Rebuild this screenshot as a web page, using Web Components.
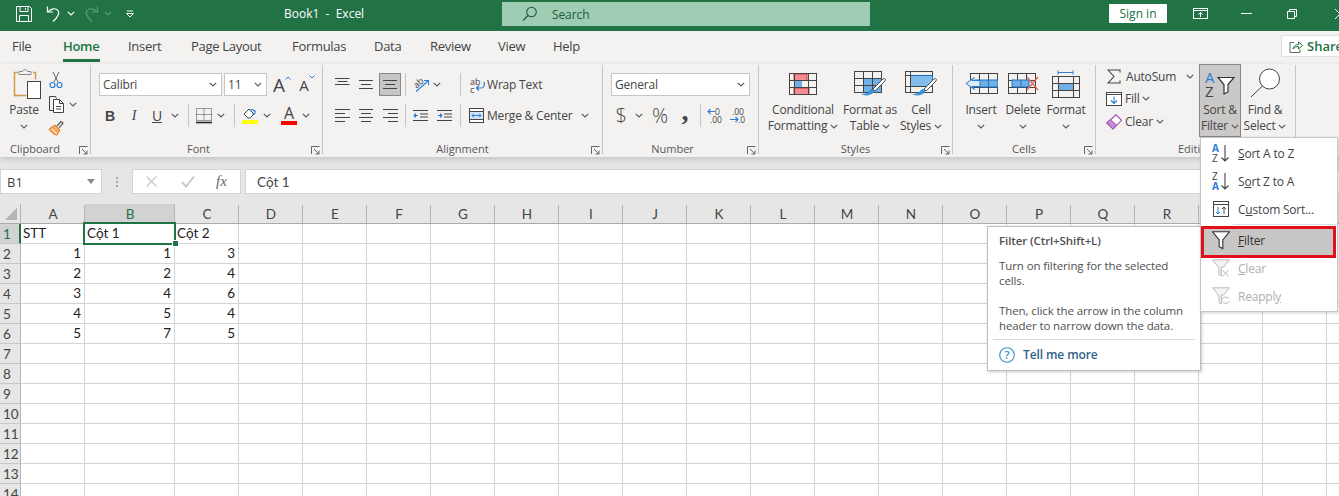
<!DOCTYPE html>
<html lang="en">
<head>
<meta charset="utf-8">
<title>Book1 - Excel</title>
<style>
  html, body { margin: 0; padding: 0; }
  body {
    width: 1339px;
    height: 496px;
    overflow: hidden;
    position: relative;
    background: #fff;
    font-family: "Open Sans", "Noto Sans", sans-serif;
    font-size: 12px;
    color: #444;
  }
</style>
</head>
<body>
<xl-titlebar></xl-titlebar>
<xl-tabs></xl-tabs>
<xl-ribbon></xl-ribbon>
<xl-formula-bar></xl-formula-bar>
<xl-sheet></xl-sheet>
<xl-tooltip></xl-tooltip>
<xl-menu></xl-menu>

<script>
const GRID = '#444';

const chev = (color = '#555') =>
  `<svg width="8" height="5" viewBox="0 0 8 5" style="display:inline-block;vertical-align:middle"><path d="M.8.8 4 4l3.2-3.2" fill="none" stroke="${color}" stroke-width="1.1"/></svg>`;

const launcher = `<svg width="9" height="9" viewBox="0 0 9 9"><path d="M.5 8V.5H8.500M3 3l5 5M8 4.500V8H4.500" fill="none" stroke="#666"/></svg>`;

// grid of cells used by the big ribbon icons
const gridLines = (x, y, w, h, xs, ys) =>
  `<rect x="${x + .5}" y="${y + .5}" width="${w - 1}" height="${h - 1}" fill="none" stroke="${GRID}"/>` +
  xs.map(v => `<path d="M${v + .5} ${y}v${h}" stroke="${GRID}"/>`).join('') +
  ys.map(v => `<path d="M${x} ${v + .5}h${w}" stroke="${GRID}"/>`).join('');

const brush = `<path d="M29 8 19 18l2 2L31 10c1-2 0-3-2-2z" fill="#fff" stroke="#555"/><path d="M18 18c-3 0-3 4-5 4-2 .5-4 1-6 1 3 2 9 2 12-1 1-1 2-2 1-3z" fill="#3c8fdc"/>`;

const ICONS = {
  save: [18, 18, `<path d="M1.500 1.500h13l2 2v13h-15zM5 1.500v5h8v-5M4.500 16.500v-6h9v6M10.500 3v2" fill="none" stroke="#fff"/>`],
  undo: [16, 18, `<path d="M1.500 1.500v5.500h5.500" fill="none" stroke="#fff" stroke-width="1.200"/><path d="M2 7c3-4 8-4 10-1.500 2 3 .5 6-5 11" fill="none" stroke="#fff" stroke-width="1.200"/>`],
  redo: [16, 18, `<path d="M14.500 1.500v5.500H9" fill="none" stroke="#5e9a7c" stroke-width="1.200"/><path d="M14 7c-3-4-8-4-10-1.500-2 3-.5 6 5 11" fill="none" stroke="#5e9a7c" stroke-width="1.200"/>`],
  qat: [8, 8, `<path d="M1 1h6" stroke="#fff"/><path d="M.500 3.500h7L4 7z" fill="none" stroke="#fff"/>`],
  search: [15, 16, `<circle cx="9.500" cy="6" r="4.800" fill="none" stroke="#1d5b3b" stroke-width="1.100"/><path d="M6 9.500 1 14.500" stroke="#1d5b3b" stroke-width="1.100"/>`],
  display: [15, 11, `<rect x=".5" y=".5" width="14" height="10" fill="none" stroke="#fff"/><path d="M0 2.500h15" stroke="#fff"/><path d="M7.500 9V4.500M5.500 6.500l2-2 2 2" fill="none" stroke="#fff"/>`],
  minimize: [11, 1, `<path d="M0 .5h11" stroke="#fff"/>`],
  restore: [10, 10, `<path d="M.5 2.500h7v7h-7zM2.500 2.500v-2h7v7h-2" fill="none" stroke="#fff"/>`],
  close: [10, 10, `<path d="M0 0l10 10M10 0 0 10" stroke="#fff"/>`],
  share: [14, 13, `<path d="M5 2.500H1v10h10v-3" fill="none" stroke="#666"/><path d="M4 9c.5-3 3-4.500 5.500-4.500V2l4 3.500-4 3.500V6.500C7.500 6.500 5.500 7.500 4 9z" fill="none" stroke="#217346"/>`],

  paste: [28, 32, `<path d="M5 4.500H1.500v23H5" fill="none" stroke="#d39a4e" stroke-width="1.500"/><path d="M20 4.500h2.500v7" fill="none" stroke="#d39a4e" stroke-width="1.500"/><path d="M1.500 27.500h12" stroke="#d39a4e" stroke-width="1.500"/><path d="M6 6.500V3.500h3.500C10 1 14 1 14.500 3.500H18v3z" fill="#f3f2f1" stroke="#888"/><rect x="14.500" y="13.500" width="13" height="17" fill="#fff" stroke="#444"/>`],
  cut: [14, 18, `<path d="M4 1l5 10M10 1 5 11" fill="none" stroke="#666"/><circle cx="3.500" cy="14" r="2.500" fill="none" stroke="#2b7cd3" stroke-width="1.200"/><circle cx="10.500" cy="14" r="2.500" fill="none" stroke="#2b7cd3" stroke-width="1.200"/>`],
  copy: [16, 17, `<path d="M5.500 14.500h-4V.500h6l1 2" fill="none" stroke="#444"/><path d="M5.500 3.500h6l4 4v9h-10z" fill="#fff" stroke="#444"/><path d="M11.500 3.500v4h4M8 10.500h5M8 13h5" fill="none" stroke="#444"/>`],
  painter: [16, 16, `<path d="M9 6 13 1.500 15 3l-4 5" fill="none" stroke="#555" stroke-width="1.200"/><path d="M1 9l6-4 5 5-3 5c-3 0-6-3-8-6z" fill="#f2ab62" stroke="#d97a1a"/><path d="M4 9l5 5" stroke="#fff"/>`],
  borders: [16, 16, `<path d="M.5.5h15v12H.5zM8 .5v12M.5 6.500h15" fill="none" stroke="#444" stroke-dasharray="1 1"/><path d="M0 14.500h16" stroke="#222" stroke-width="1.600"/>`],
  fill: [16, 17, `<path d="M2 7 7 2l5 5-4 4H6z" fill="#fff" stroke="#444"/><path d="M13 5c-2-3-4-3-5-1" fill="none" stroke="#2b7cd3" stroke-width="1.200"/><path d="M13 3v4h-3" fill="none" stroke="#2b7cd3"/><rect x="0" y="13" width="16" height="4" fill="#ffff00"/>`],
  atop: [15, 9, `<path d="M0 .5h14.500M2.500 3.500h10M0 6.500h14.500" stroke="#444"/>`],
  amid: [14, 9, `<path d="M0 .5h14M2 4.500h10M0 8.500h14" stroke="#444"/>`],
  abot: [14, 9, `<path d="M0 .5h14M2 4.500h10M0 8.500h14" stroke="#444"/>`],
  orient: [17, 16, `<text x="1" y="9" font-size="9" fill="#444" font-family="Open Sans" transform="rotate(-40 6 7)">ab</text><path d="M3 14.500 15 4M11 3.500h4.500V8" fill="none" stroke="#2b7cd3" stroke-width="1.100"/>`],
  aleft: [15, 13, `<path d="M0 .5h15M0 4.500h10M0 8.500h15M0 12.500h10" stroke="#444"/>`],
  acenter: [14, 13, `<path d="M0 .5h14M2 4.500h10M0 8.500h14M2 12.500h10" stroke="#444"/>`],
  aright: [15, 13, `<path d="M0 .5h15M5 4.500h10M0 8.500h15M5 12.500h10" stroke="#444"/>`],
  indL: [15, 11, `<path d="M0 .5h15M7 4h8M7 7h8M0 10.500h15" stroke="#444"/><path d="M5 5.500H1M3 3.500l-2 2 2 2" fill="none" stroke="#2b7cd3" stroke-width="1.100"/>`],
  indR: [15, 11, `<path d="M0 .5h15M7 4h8M7 7h8M0 10.500h15" stroke="#444"/><path d="M1 5.500h4M3 3.500l2 2-2 2" fill="none" stroke="#2b7cd3" stroke-width="1.100"/>`],
  wrap: [15, 16, `<text x="0" y="7.500" font-size="9" fill="#444" font-family="Open Sans">ab</text><text x="0" y="15.500" font-size="9" fill="#444" font-family="Open Sans">c</text><path d="M14 5c1 3 0 6-3 6H6.500M9 8.500 6.500 11 9 13.500" fill="none" stroke="#2b7cd3" stroke-width="1.200"/>`],
  merge: [15, 15, `<rect x=".5" y=".5" width="14" height="14" fill="#fff" stroke="#444"/><path d="M0 3.500h15M0 11.500h15" stroke="#444"/><rect x="1" y="4" width="13" height="7" fill="#d4e7f8"/><path d="M3 7.500h9M5 5.500l-2 2 2 2M10 5.500l2 2-2 2" fill="none" stroke="#2b7cd3"/>`],
  incdec: [16, 17, `<text x="8" y="8" font-size="8.500" fill="#444" font-family="Open Sans">0</text><text x="3" y="16" font-size="8.500" fill="#444" font-family="Open Sans">.00</text><path d="M8 4.500H1M3.500 2 1 4.500 3.500 7" fill="none" stroke="#2b7cd3" stroke-width="1.100"/>`],
  decdec: [16, 17, `<text x="3" y="8" font-size="8.500" fill="#444" font-family="Open Sans">.00</text><text x="9" y="16" font-size="8.500" fill="#444" font-family="Open Sans">.0</text><path d="M1 12.500h8M6.500 10 9 12.500 6.500 15" fill="none" stroke="#2b7cd3" stroke-width="1.100"/>`],

  cond: [28, 22, `<rect x="5" y="1" width="13" height="6.500" fill="#f48a94" stroke="#d13438"/><rect x="5" y="8" width="8" height="6" fill="#6fb0e8"/><rect x="5" y="15" width="15" height="6.500" fill="#f48a94" stroke="#d13438"/>${gridLines(0, 0, 28, 22, [5, 19], [7, 14])}`],
  table: [32, 26, `<rect x="10" y="8" width="18" height="14" fill="#6fb0e8"/>${gridLines(0, 0, 28, 22, [9, 18], [7, 14])}${brush}`],
  styles: [32, 26, `<rect x="6" y="4" width="22" height="12" fill="#83bbec"/>${gridLines(0, 0, 28, 22, [5], [4, 15])}<path d="M6 4.500h22M27.500 4v12" stroke="#1f6fb8"/>${brush}`],
  insert: [33, 22, `${gridLines(5, 0, 28, 21, [14, 23], [7, 14])}<rect x="10" y="7" width="23" height="7" fill="#6fb0e8" stroke="#1f6fb8"/><path d="M23.500 7v7" stroke="#1f6fb8"/><path d="M15 7.500H7l2.500-3L1 10.500l8.500 6L7 13.500h8z" fill="#dcebf9" stroke="#2b7cd3"/>`],
  remove: [31, 22, `${gridLines(0, 0, 28, 21, [9, 18], [7, 14])}<rect x="4" y="7" width="17" height="7" fill="#6fb0e8" stroke="#1f6fb8"/><path d="M13 7v7" stroke="#1f6fb8"/><path d="M19 4l11 13M30 4 19 17" stroke="#e8625b" stroke-width="1.300"/>`],
  format: [28, 28, `<path d="M6 .5v4M21 .5v4M6 2.500h15" fill="none" stroke="#2b7cd3"/><rect x="6" y="13" width="16" height="7" fill="#6fb0e8"/>${`<g transform="translate(0 6)">${gridLines(0, 0, 28, 22, [6, 21], [7, 14])}</g>`}`],
  sigma: [14, 15, `<path d="M13 3.500V1H1l6 6.500L1 14h12v-2.500" fill="none" stroke="#444" stroke-width="1.100"/>`],
  filldown: [16, 14, `<rect x=".5" y=".5" width="15" height="13" fill="#fff" stroke="#444"/><path d="M0 2.500h16" stroke="#444"/><path d="M8 4.500v7M5 8.500l3 3 3-3" fill="none" stroke="#2b7cd3" stroke-width="1.100"/>`],
  eraser: [16, 16, `<path d="M.8 9 10 .8l5.500 5.500L7 15z" fill="#fff" stroke="#a24bb4" stroke-width="1.100"/><path d="M.8 9 4.500 5.500 10.500 11 7 15z" fill="#c98bd6" stroke="#a24bb4"/>`],
  sortbig: [31, 28, `<text x="0" y="13" font-size="15" fill="#2b7cd3" font-family="Open Sans">A</text><text x="0" y="27" font-size="15" fill="#444" font-family="Open Sans">Z</text><path d="M13 7.500h16l-6 7v7.500l-4 2v-9.500z" fill="#fff" stroke="#333" stroke-width="1.200"/>`],
  find: [30, 31, `<circle cx="19.500" cy="11" r="10" fill="#fff" stroke="#444"/><path d="M12.500 18 1 29" stroke="#444"/>`],

  az: [18, 19, `<text x="0" y="8" font-size="10" font-weight="700" fill="#2b7cd3" font-family="Open Sans">A</text><text x="0" y="18" font-size="10" fill="#444" font-family="Open Sans">Z</text><path d="M13 1v16M9.500 13.500 13 17l3.500-3.500" fill="none" stroke="#444" stroke-width="1.100"/>`],
  za: [18, 19, `<text x="0" y="8" font-size="10" fill="#444" font-family="Open Sans">Z</text><text x="0" y="18" font-size="10" font-weight="700" fill="#2b7cd3" font-family="Open Sans">A</text><path d="M13 1v16M9.500 13.500 13 17l3.500-3.500" fill="none" stroke="#444" stroke-width="1.100"/>`],
  custom: [16, 16, `<rect x=".5" y=".5" width="15" height="15" fill="#fff" stroke="#444"/><path d="M0 3.500h16" stroke="#444"/><path d="M5 6v7M3 11l2 2 2-2" fill="none" stroke="#2b7cd3"/><path d="M11 13V6M9 8l2-2 2 2" fill="none" stroke="#444"/>`],
  funnel: [18, 19, `<path d="M.6.8h16.800l-6.600 8.200v8.500l-3.600-1.800V9z" fill="#fff" stroke="#333" stroke-width="1.100"/>`],
  funnelx: [18, 19, `<path d="M.6.8h16.800l-5.600 7.200H9.300v9l-2.300-1.200V9z" fill="#f3f3f3" stroke="#bbb"/><path d="M10.500 11l6 6.500M16.500 11l-6 6.500" stroke="#bbb"/>`],
  funnelr: [18, 19, `<path d="M.6.8h16.800l-5.600 7.200H9.300v9l-2.300-1.200V9z" fill="#f3f3f3" stroke="#bbb"/><path d="M10 13c0-3 5-4 7-1.500M17.500 14c-1 3-6 3-7 .5" fill="none" stroke="#bbb"/>`],
  help: [16, 16, `<circle cx="8" cy="8" r="7.300" fill="none" stroke="#2f8fc4" stroke-width="1.100"/><text x="8" y="12" font-size="11" font-weight="600" text-anchor="middle" fill="#2f8fc4" font-family="Open Sans">?</text>`],
  xmark: [13, 13, `<path d="M1.500 1.500l10 10M11.500 1.500l-10 10" stroke="#c8c8c8" stroke-width="1.400"/>`],
  check: [14, 13, `<path d="M1 7l4 4.500L13 1.500" fill="none" stroke="#c8c8c8" stroke-width="2"/>`],
};

class XlIcon extends HTMLElement {
  connectedCallback() {
    const [w, h, body] = ICONS[this.getAttribute('name')];
    this.attachShadow({ mode: 'open' }).innerHTML = `
      <style>:host{display:inline-flex;flex:none;line-height:0;letter-spacing:0}</style>
      <svg width="${w}" height="${h}" viewBox="0 0 ${w} ${h}">${body}</svg>`;
  }
}
customElements.define('xl-icon', XlIcon);

class XlTitlebar extends HTMLElement {
  constructor() {
    super();
    this.attachShadow({ mode: 'open' }).innerHTML = `
      <style>
        :host { display: flex; height: 31px; background: #217346; color: #fff; font-size: 12px; overflow: hidden; }
        .qat { display: flex; align-items: center; flex: none; width: 284px; height: 27px; padding-left: 15px; box-sizing: border-box; }
        .title { flex: none; width: 218px; white-space: pre; line-height: 27px; }
        .search { flex: none; width: 368px; height: 24px; margin-top: 2px; background: #9fcdb3; color: #1d5b3b; display: flex; align-items: center; padding-left: 20px; box-sizing: border-box; letter-spacing: -.1px; }
        .search span { margin-left: 15px; }
        .right { flex: none; display: flex; align-items: center; height: 27px; }
        .sign { margin-left: 239px; width: 58px; height: 19px; background: #fff; color: #217346; border-radius: 1px; text-align: center; line-height: 19px; }
      </style>
      <div class="qat">
        <xl-icon name="save"></xl-icon>
        <xl-icon name="undo" style="margin-left:13px"></xl-icon>
        <span style="margin-left:5px;line-height:0">${chev('#fff')}</span>
        <xl-icon name="redo" style="margin-left:8px"></xl-icon>
        <span style="margin-left:5px;line-height:0">${chev('#5e9a7c')}</span>
        <xl-icon name="qat" style="margin-left:14px"></xl-icon>
      </div>
      <div class="title">Book1  -  Excel</div>
      <div class="search"><xl-icon name="search"></xl-icon><span>Search</span></div>
      <div class="right">
        <div class="sign">Sign in</div>
        <xl-icon name="display" style="margin-left:26px"></xl-icon>
        <xl-icon name="minimize" style="margin-left:33px"></xl-icon>
        <xl-icon name="restore" style="margin-left:35px"></xl-icon>
        <xl-icon name="close" style="margin-left:38px"></xl-icon>
      </div>`;
  }
}
customElements.define('xl-titlebar', XlTitlebar);

class XlTabs extends HTMLElement {
  constructor() {
    super();
    const tabs = [['File', 12], ['Home', 63], ['Insert', 128], ['Page Layout', 191], ['Formulas', 292], ['Data', 374], ['Review', 430], ['View', 498], ['Help', 553]];
    const widths = tabs.map((t, i) => (tabs[i + 1] ? tabs[i + 1][1] - t[1] : 60));
    this.attachShadow({ mode: 'open' }).innerHTML = `
      <style>
        :host { display: flex; height: 33px; background: #f3f2f1; font-size: 13px; letter-spacing: -.3px; color: #444; padding-left: 12px; box-sizing: border-box; position: relative; }
        .tab { line-height: 30px; flex: none; white-space: nowrap; }
        .tab.on span { display: inline-block; height: 28px; color: #217346; font-weight: 600; border-bottom: 3px solid #217346; padding-right: 1px; }
        .share { margin-left: auto; margin-top: 4px; width: 58px; height: 22px; background: #fff; border: 1px solid #e1dfdd; border-right: 0; border-radius: 2px 0 0 2px; box-sizing: border-box; display: flex; align-items: center; padding-left: 7px; color: #217346; font-weight: 600; overflow: hidden; white-space: nowrap; letter-spacing: 0; }
        .share span { margin-left: 4px; }
      </style>
      ${tabs.map((t, i) => `<div class="tab ${t[0] === 'Home' ? 'on' : ''}" style="width:${widths[i]}px"><span>${t[0]}</span></div>`).join('')}
      <div class="share"><xl-icon name="share"></xl-icon><span>Share</span></div>`;
  }
}
customElements.define('xl-tabs', XlTabs);

class XlGroup extends HTMLElement {
  constructor() {
    super();
    this.attachShadow({ mode: 'open' }).innerHTML = `
      <style>
        :host { display: flex; flex-direction: column; flex: none; height: 89px; box-sizing: border-box; border-right: 1px solid #c8c6c4; position: relative; }
        .body { flex: 1; min-height: 0; display: flex; }
        .label { height: 16px; line-height: 16px; margin-bottom: -3px; text-align: center; font-size: 11px; letter-spacing: 0; color: #555; position: relative; }
        .launch { position: absolute; top: 4px; right: 2px; line-height: 0; }
        .launch.off { display: none; }
      </style>
      <div class="body"><slot></slot></div>
      <div class="label"><span id="t"></span></div>
      <span class="launch" style="bottom:-1px;top:auto">${launcher}</span>`;
  }
  connectedCallback() {
    this.shadowRoot.getElementById('t').textContent = this.getAttribute('label');
    if (this.hasAttribute('nolaunch')) this.shadowRoot.querySelector('.launch').classList.add('off');
    const off = this.getAttribute('offset');
    if (off) this.shadowRoot.querySelector('.label').style.left = off + 'px';
  }
}
customElements.define('xl-group', XlGroup);

class XlBig extends HTMLElement {
  constructor() {
    super();
    this.attachShadow({ mode: 'open' }).innerHTML = `
      <style>
        :host { display: flex; flex-direction: column; align-items: center; flex: none; font-size: 12px; color: #444; }
        .icon { height: 37px; display: flex; align-items: center; justify-content: center; }
        .line { height: 16px; line-height: 16px; white-space: nowrap; text-align: center; }
      </style>
      <div class="icon"><slot></slot></div>
      <div class="line" id="a"></div>
      <div class="line" id="b"></div>`;
  }
  connectedCallback() {
    this.shadowRoot.getElementById('a').textContent = this.getAttribute('a');
    this.shadowRoot.getElementById('b').innerHTML = (this.getAttribute('b') || '') + ' ' + chev();
  }
}
customElements.define('xl-big', XlBig);

class XlRibbon extends HTMLElement {
  constructor() {
    super();
    const c = (w, html = '', style = '') => `<span class="c" style="width:${w}px;${style}">${html}</span>`;
    const ic = n => `<xl-icon name="${n}"></xl-icon>`;
    const sep = w => c(w, '<i class="sep"></i>');
    this.attachShadow({ mode: 'open' }).innerHTML = `
      <style>
        :host { display: flex; height: 93px; padding-top: 1px; box-sizing: border-box; background: #f3f2f1; font-size: 12px; letter-spacing: -.2px; color: #444; box-shadow: 0 2px 6px rgba(0,0,0,.16); position: relative; z-index: 1; }
        .rows { display: flex; flex-direction: column; flex: none; }
        .row { display: flex; align-items: center; flex: none; }
        .c { display: inline-flex; align-items: center; justify-content: center; flex: none; height: 100%; }
        .sep { display: block; width: 1px; height: 23px; background: #c8c6c4; }
        .box { height: 23px; background: #fff; border: 1px solid #c8c6c4; box-sizing: border-box; display: flex; align-items: center; justify-content: space-between; padding: 0 4px 0 3px; flex: none; }
        .selected { height: 23px; width: 22px; background: #c8c6c4; border: 1px solid #8a8886; box-sizing: border-box; }
        .grow { font-size: 19px; position: relative; color: #444; line-height: 20px; }
        .sup { position: absolute; top: -2px; right: -6px; line-height: 0; }
        .sort { width: 42px; height: 73px; margin-top: -1px; background: #cbc9c7; border: 1px solid #8a8886; box-sizing: border-box; z-index: 2; }
        .tx { margin-left: 3px; white-space: nowrap; }
      </style>

      <xl-group label="Clipboard" offset="-10" style="width:91px">
        <xl-big a="Paste" style="width:38px;margin-left:5px"><xl-icon name="paste" style="margin-left:5px"></xl-icon></xl-big>
        <div class="rows" style="margin-left:5px;padding-top:3px">
          <div class="row" style="height:24px;padding-left:1px">${ic('cut')}</div>
          <div class="row" style="height:24px">${ic('copy')}<span style="margin-left:5px;line-height:0">${chev()}</span></div>
          <div class="row" style="height:24px">${ic('painter')}</div>
        </div>
      </xl-group>

      <xl-group label="Font" offset="-8" style="width:232px">
        <div class="rows" style="padding:8px 0 0 8px">
          <div class="row" style="height:23px">
            <div class="box" style="width:123px">Calibri ${chev()}</div>
            <div class="box" style="width:43px;margin-left:2px">11 ${chev()}</div>
            ${c(22, `<span class="grow">A<span class="sup"><svg width="6" height="4"><path d="M.5 3.500 3 1l2.500 2.500" fill="none" stroke="#2b7cd3"/></svg></span></span>`, 'margin-left:1px')}
            ${c(24, `<span class="grow" style="font-size:15px">A<span class="sup"><svg width="6" height="4"><path d="M.5.5 3 3 5.500.5" fill="none" stroke="#2b7cd3"/></svg></span></span>`, 'margin-left:2px')}
          </div>
          <div class="row" style="height:23px;margin-top:8px;margin-left:-1px">
            ${c(24, '<b style="font-size:14px;font-family:Liberation Sans">B</b>')}
            ${c(24, '<i style="font-size:14px;font-family:Liberation Serif">I</i>')}
            ${c(22, '<u style="font-size:14px">U</u>')}
            ${c(14, chev())}
            ${sep(12)}
            ${c(20, ic('borders'))}
            ${c(14, chev())}
            ${sep(12)}
            ${c(20, ic('fill'))}
            ${c(14, chev())}
            ${c(22, `<span style="display:inline-flex;flex-direction:column;align-items:center;font-size:16px;line-height:14px">A<i style="display:block;width:16px;height:4px;background:#f00;margin-top:1px"></i></span>`, 'margin-left:4px')}
            ${c(12, chev())}
          </div>
        </div>
      </xl-group>

      <xl-group label="Alignment" style="width:280px">
        <div class="rows" style="padding:8px 0 0 12px">
          <div class="row" style="height:23px">
            ${c(14, ic('atop'), 'margin-top:-5px')}${c(10)}
            ${c(14, ic('amid'))}${c(6)}
            <span class="selected c">${ic('abot')}</span>
            ${sep(8)}${c(17, ic('orient'), 'margin-left:4px')}
            ${c(12, chev(), 'margin-left:1px')}
            ${sep(34)}
            ${c(15, ic('wrap'), 'margin-left:-7px')}
            <span class="tx" style="margin-left:2px">Wrap Text</span>
          </div>
          <div class="row" style="height:23px;margin-top:8px">
            ${c(14, ic('aleft'))}${c(10)}
            ${c(14, ic('acenter'))}${c(10)}
            ${c(14, ic('aright'))}
            ${sep(16)}
            ${c(14, ic('indL'))}${c(10)}
            ${c(14, ic('indR'))}
            ${sep(18)}
            ${c(15, ic('merge'))}
            <span class="tx">Merge &amp; Center</span>
            ${c(8, chev(), 'margin-left:9px')}
          </div>
        </div>
      </xl-group>

      <xl-group label="Number" offset="-8" style="width:156px">
        <div class="rows" style="padding:8px 0 0 8px">
          <div class="row" style="height:23px"><div class="box" style="width:139px">General ${chev()}</div></div>
          <div class="row" style="height:23px;margin-top:8px">
            ${c(20, '<span style="font-size:20px;font-weight:300">$</span>')}
            ${c(16, chev())}
            ${c(26, '<span style="font-size:20px;font-weight:300">%</span>')}
            ${c(24, '<b style="font-size:28px;line-height:20px;font-family:Liberation Serif;margin-top:-10px">,</b>')}
            ${sep(6)}
            ${c(18, ic('incdec'), 'margin-left:3px')}${c(7)}${c(18, ic('decdec'), 'margin-left:-3px')}
          </div>
        </div>
      </xl-group>

      <xl-group label="Styles" style="width:194px">
        <xl-big a="Conditional" b="Formatting" style="width:66px;margin-left:11px">${ic('cond')}</xl-big>
        <xl-big a="Format as" b="Table" style="width:64px;margin-left:2px">${ic('table')}</xl-big>
        <xl-big a="Cell" b="Styles" style="width:36px;margin-left:1px">${ic('styles')}</xl-big>
      </xl-group>

      <xl-group label="Cells" style="width:143px">
        <xl-big style="width:42px;margin-left:7px" a="Insert">${ic('insert')}</xl-big>
        <xl-big style="width:42px" a="Delete">${ic('remove')}</xl-big>
        <xl-big style="width:42px;margin-left:1px" a="Format">${ic('format')}</xl-big>
      </xl-group>

      <xl-group label="Editing" nolaunch style="width:200px">
        <div class="rows" style="width:103px;padding-left:11px;box-sizing:border-box">
          <div class="row" style="height:22px">${ic('sigma')}<span class="tx" style="margin-left:5px">AutoSum</span><span style="margin-left:10px;line-height:0">${chev()}</span></div>
          <div class="row" style="height:23px;margin-left:-1px">${ic('filldown')}<span class="tx">Fill</span><span style="margin-left:3px;line-height:0">${chev()}</span></div>
          <div class="row" style="height:23px;margin-left:-1px">${ic('eraser')}<span class="tx">Clear</span><span style="margin-left:3px;line-height:0">${chev()}</span></div>
        </div>
        <xl-big class="sort" a="Sort &amp;" b="Filter">${ic('sortbig')}</xl-big>
        <xl-big a="Find &amp;" b="Select" style="width:40px;margin-left:4px">${ic('find')}</xl-big>
      </xl-group>`;
  }
}
customElements.define('xl-ribbon', XlRibbon);

class XlFormulaBar extends HTMLElement {
  constructor() {
    super();
    this.attachShadow({ mode: 'open' }).innerHTML = `
      <style>
        :host { display: flex; height: 47px; padding-top: 12px; box-sizing: border-box; background: #e6e6e6; font-size: 13px; color: #444; }
        .box { height: 25px; background: #fff; border: 1px solid #d4d4d4; box-sizing: border-box; display: flex; align-items: center; flex: none; }
        .name { width: 102px; justify-content: space-between; padding: 0 6px; }
        .tri { width: 0; height: 0; border: 4px solid transparent; border-top: 5px solid #888; border-bottom: 0; }
        .dots { width: 30px; height: 25px; display: flex; flex-direction: column; align-items: center; gap: 2px; justify-content: center; flex: none; }
        .dots i { width: 2px; height: 2px; background: #aaa; display: block; }
        .fn { width: 109px; }
        .fx { font-family: "Liberation Serif", serif; font-style: italic; font-size: 15px; color: #666; margin-left: 21px; }
        .input { flex: 1; margin-left: 4px; padding-left: 11px; border-right: 0; font-family: "Lato", sans-serif; font-size: 13.5px; }
      </style>
      <div class="box name"><span>B1</span><i class="tri"></i></div>
      <div class="dots"><i></i><i></i><i></i></div>
      <div class="box fn">
        <xl-icon name="xmark" style="margin-left:12px"></xl-icon>
        <xl-icon name="check" style="margin-left:23px"></xl-icon>
        <span class="fx">fx</span>
      </div>
      <div class="box input">Cột 1</div>`;
  }
}
customElements.define('xl-formula-bar', XlFormulaBar);

class XlSheet extends HTMLElement {
  constructor() {
    super();
    const data = [
      [null, 'STT', 'Cột 1', 'Cột 2'],
      [null, 1, 1, 3],
      [null, 2, 2, 4],
      [null, 3, 4, 6],
      [null, 4, 5, 4],
      [null, 5, 7, 5],
    ];
    const letters = 'ABCDEFGHIJKLMNOPQRSTU'.split('');
    let html = '<div class="hd corner"><i></i></div>';
    letters.forEach((l, i) => { html += `<div class="hd col ${i === 1 ? 'on' : ''}"><span>${l}</span></div>`; });
    for (let r = 0; r < 14; r++) {
      html += `<div class="hd rowh ${r === 0 ? 'on' : ''}">${r + 1}</div>`;
      letters.forEach((l, i) => {
        const v = data[r] ? data[r][i + 1] : undefined;
        const cls = typeof v === 'number' ? 'num' : '';
        const sel = r === 0 && i === 1 ? '<b class="sel"></b><b class="handle"></b>' : '';
        html += `<div class="cell ${cls}">${v === undefined ? '' : v}${sel}</div>`;
      });
    }
    this.attachShadow({ mode: 'open' }).innerHTML = `
      <style>
        :host { display: grid; grid-template-columns: 21px 64px 90px repeat(19, 64px); grid-auto-rows: 20px; height: 292px; overflow: hidden; background: #fff; font-family: "Lato", "Liberation Sans", sans-serif; font-size: 13.5px; color: #222; }
        .hd { background: #e6e6e6; color: #444; box-sizing: border-box; display: flex; align-items: center; justify-content: center; }
        .corner { border-right: 1px solid #b5b5b5; border-bottom: 1px solid #ababab; position: relative; }
        .corner i { position: absolute; right: 3px; bottom: 3px; border-style: solid; border-width: 0 0 12px 12px; border-color: transparent transparent #b4b4b4 transparent; }
        .col { border-bottom: 1px solid #ababab; position: relative; }
        .col::after { content: ''; position: absolute; right: 0; top: 1px; bottom: 0; width: 1px; background: #b5b5b5; }
        .col.on { background: #d2d2d2; color: #217346; }
        .rowh { justify-content: flex-start; padding-left: 3px; border-right: 1px solid #b5b5b5; border-bottom: 1px solid #c8c8c8; }
        .rowh.on { background: #d2d2d2; color: #217346; border-right: 2px solid #217346; }
        .cell { box-sizing: border-box; border-right: 1px solid #d4d4d4; border-bottom: 1px solid #d4d4d4; padding: 0 2px; line-height: 19px; white-space: nowrap; position: relative; }
        .num { text-align: right; padding-right: 3px; }
        .sel { position: absolute; left: -2px; top: -2px; width: 93px; height: 23px; box-sizing: border-box; border: 2px solid #217346; z-index: 1; }
        .handle { position: absolute; left: 87px; top: 16px; width: 5px; height: 5px; background: #217346; border: 1px solid #fff; z-index: 2; }
      </style>
      ${html}`;
  }
}
customElements.define('xl-sheet', XlSheet);

class XlTooltip extends HTMLElement {
  constructor() {
    super();
    this.attachShadow({ mode: 'open' }).innerHTML = `
      <style>
        :host { position: absolute; left: 987px; top: 226px; width: 214px; height: 145px; box-sizing: border-box; background: #fff; border: 1px solid #bdbdbd; box-shadow: 1px 1px 3px rgba(0,0,0,.2); padding: 6px 11px 0; font-size: 11.5px; letter-spacing: -.1px; color: #505050; z-index: 3; }
        h4 { margin: 0; font-size: 11.5px; font-weight: 600; line-height: 15px; }
        p { margin: 10px 0 0; line-height: 15px; }
        p + p { margin-top: 15px; }
        hr { border: 0; border-top: 1px solid #d9d9d9; margin: 6px -6px 0; }
        .more { display: flex; align-items: center; margin-top: 6px; color: #2e5f8a; font-weight: 600; font-size: 12px; }
        .more span { margin-left: 8px; }
      </style>
      <h4>Filter (Ctrl+Shift+L)</h4>
      <p>Turn on filtering for the selected<br>cells.</p>
      <p>Then, click the arrow in the column<br>header to narrow down the data.</p>
      <hr>
      <div class="more"><xl-icon name="help"></xl-icon><span>Tell me more</span></div>`;
  }
}
customElements.define('xl-tooltip', XlTooltip);

class XlMenu extends HTMLElement {
  constructor() {
    super();
    const item = (icon, label, cls = '') => `<div class="item ${cls}"><span class="ic"><xl-icon name="${icon}"></xl-icon></span><span>${label}</span></div>`;
    this.attachShadow({ mode: 'open' }).innerHTML = `
      <style>
        :host { position: absolute; left: 1200px; top: 137px; width: 138px; height: 175px; box-sizing: border-box; background: #fff; border: 1px solid #c8c6c4; box-shadow: 1px 1px 3px rgba(0,0,0,.18); font-size: 12px; letter-spacing: -.2px; color: #444; z-index: 4; padding-top: 1px; }
        .item { display: flex; align-items: center; height: 28px; }
        .ic { width: 37px; display: flex; justify-content: center; padding-left: 2px; box-sizing: border-box; }
        .rule { height: 1px; background: #e1dfdd; margin: 1px 0 1px 32px; }
        .filter { height: 32px; margin: 0 1px -4px 0; padding-bottom: 4px; background: #c8c6c4; border: 3px solid #e3101b; box-sizing: border-box; color: #333; }
        .filter .ic { width: 34px; padding-left: 0; }
        .off { color: #b0b0b0; }
      </style>
      ${item('az', '<u>S</u>ort A to Z')}
      ${item('za', 'S<u>o</u>rt Z to A')}
      ${item('custom', 'C<u>u</u>stom Sort...')}
      <div class="rule"></div>
      ${item('funnel', '<u>F</u>ilter', 'filter')}
      ${item('funnelx', '<u>C</u>lear', 'off')}
      ${item('funnelr', 'Reappl<u>y</u>', 'off')}`;
  }
}
customElements.define('xl-menu', XlMenu);
</script>
</body>
</html>
